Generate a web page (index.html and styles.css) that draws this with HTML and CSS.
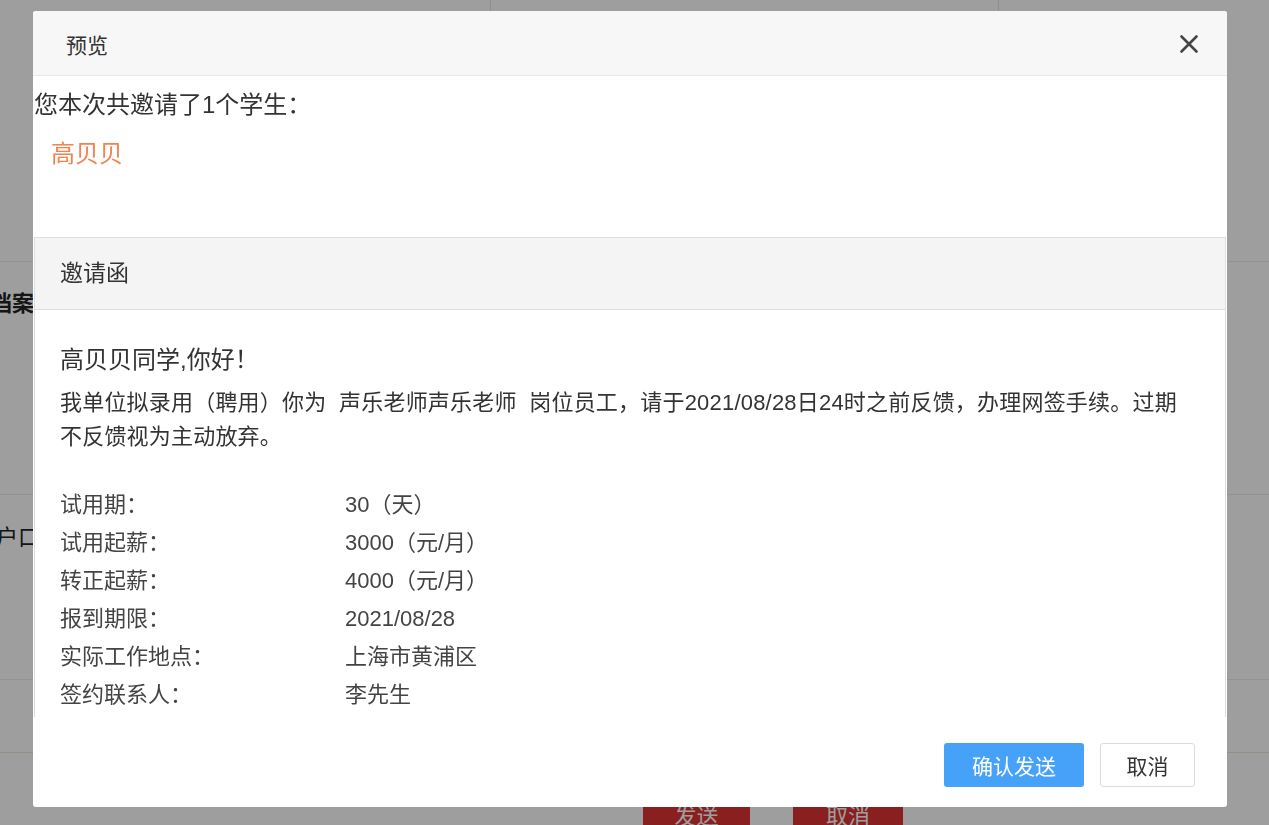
FILE: index.html
```html
<!DOCTYPE html>
<html lang="zh-CN">
<head>
  <meta charset="UTF-8">
  <title>预览</title>
  <link rel="stylesheet" href="styles.css">
</head>
<body>

<div class="page">
  <div class="page-top">
    <div class="top-cell"></div>
    <div class="top-cell"></div>
    <div class="top-cell last"></div>
  </div>
  <div class="section sec-archive">
    <div class="section-label bold">档案信息</div>
  </div>
  <div class="section sec-hukou">
    <div class="section-label hukou">户口所在地</div>
  </div>
  <div class="section sec-green"></div>
  <div class="page-actions">
    <button class="red-btn">发送</button>
    <button class="red-btn wide">取消</button>
  </div>
</div>

<div class="mask">
  <div class="modal">
    <div class="modal-header">
      <span class="modal-title">预览</span>
      <span class="modal-close">
        <svg width="20" height="20" viewBox="0 0 20 20">
          <path d="M2.5 2.5 L17.5 17.5 M17.5 2.5 L2.5 17.5" stroke="#444" stroke-width="2.6" stroke-linecap="round" fill="none"/>
        </svg>
      </span>
    </div>

    <div class="modal-body">
      <div class="invite-count">您本次共邀请了1个学生：</div>
      <div class="invite-names">高贝贝</div>

      <div class="letter">
        <div class="letter-head">邀请函</div>
        <div class="letter-body">
          <div class="greet">高贝贝同学,你好！</div>
          <p class="letter-text">我单位拟录用（聘用）你为&nbsp; 声乐老师声乐老师&nbsp; 岗位员工，请于2021/08/28日24时之前反馈，办理网签手续。过期不反馈视为主动放弃。</p>

          <div class="info">
            <div class="info-row"><span class="info-key">试用期：</span><span class="info-val">30（天）</span></div>
            <div class="info-row"><span class="info-key">试用起薪：</span><span class="info-val">3000（元/月）</span></div>
            <div class="info-row"><span class="info-key">转正起薪：</span><span class="info-val">4000（元/月）</span></div>
            <div class="info-row"><span class="info-key">报到期限：</span><span class="info-val">2021/08/28</span></div>
            <div class="info-row"><span class="info-key">实际工作地点：</span><span class="info-val">上海市黄浦区</span></div>
            <div class="info-row"><span class="info-key">签约联系人：</span><span class="info-val">李先生</span></div>
            <div class="info-row"><span class="info-key">联系电话：</span><span class="info-val">021-12345678</span></div>
          </div>
        </div>
      </div>
    </div>

    <div class="modal-footer">
      <button class="btn btn-primary">确认发送</button>
      <button class="btn btn-default">取消</button>
    </div>
  </div>
</div>

</body>
</html>
```

FILE: styles.css
```css
html, body {
  margin: 0;
  padding: 0;
  height: 100%;
  overflow: hidden;
}
body {
  font-family: "Liberation Sans", "Noto Sans CJK SC", sans-serif;
  color: #333;
  background-color: #fff;
}

/* pagina de fondo */
.page {
  width: 1269px;
}
.page-top {
  display: grid;
  grid-template-columns: 491px 508px 1fr;
  height: 261px;
  border-bottom: 1px solid #ececec;
}
.top-cell {
  border-right: 1px solid #e6e6e6;
}
.top-cell.last {
  border-right: none;
}
.section {
  border-bottom: 1px solid #ececec;
  box-sizing: border-box;
}
.sec-archive {
  height: 233px;
  padding: 27px 0 0 0;
}
.sec-hukou {
  height: 185px;
  padding: 28px 0 0 0;
}
.sec-green {
  height: 73px;
  border-bottom: 1px solid #e6edd8;
}
.section-label {
  font-size: 22px;
  line-height: 30px;
  color: #222;
  white-space: nowrap;
}
.sec-archive .section-label {
  margin-left: -10px;
  font-weight: bold;
}
.sec-hukou .section-label {
  margin-left: -4px;
}
.page-actions {
  display: flex;
  gap: 43px;
  padding: 40px 0 0 643px;
}
.red-btn {
  width: 107px;
  height: 42px;
  border: none;
  background-color: #de3232;
  color: #fff;
  font-family: inherit;
  font-size: 22px;
}
.red-btn.wide {
  width: 110px;
}

/* ventana modal */
.mask {
  position: fixed;
  top: 0;
  left: 0;
  right: 0;
  bottom: 0;
  background-color: rgba(0, 0, 0, 0.38);
  padding: 11px 0 0 33px;
}
.modal {
  width: 1194px;
  height: 796px;
  background-color: #fff;
  border-radius: 3px;
  display: flex;
  flex-direction: column;
  overflow: hidden;
}
.modal-header {
  height: 65px;
  flex: none;
  display: flex;
  align-items: center;
  justify-content: space-between;
  padding: 2px 28px 0 33px;
  box-sizing: border-box;
  background-color: #f7f7f7;
  border-bottom: 1px solid #e8e8e8;
}
.modal-title {
  font-size: 21px;
  color: #333;
}
.modal-close {
  display: flex;
  width: 20px;
  height: 20px;
}
.modal-body {
  height: 641px;
  flex: none;
  overflow: hidden;
  padding-top: 11px;
  box-sizing: border-box;
}
.invite-count {
  font-size: 24px;
  line-height: 36px;
  padding-left: 1px;
}
.invite-names {
  font-size: 24px;
  line-height: 36px;
  color: #f4834f;
  margin-top: 13px;
  padding-left: 18px;
}
.letter {
  margin: 65px 1px 0 1px;
  border: 1px solid #dedede;
}
.letter-head {
  height: 71px;
  line-height: 71px;
  padding-left: 25px;
  font-size: 23px;
  background-color: #f4f4f4;
  border-bottom: 1px solid #dedede;
}
.letter-body {
  padding: 32px 26px 60px 25px;
}
.greet {
  font-size: 24px;
  line-height: 36px;
}
.letter-text {
  margin: 8px 0 0 0;
  font-size: 22px;
  line-height: 34px;
  letter-spacing: 0.2px;
}
.info {
  margin-top: 32px;
}
.info-row {
  display: flex;
  font-size: 22px;
  line-height: 38px;
  color: #444;
}
.info-key {
  width: 285px;
  flex: none;
}

.modal-footer {
  flex: 1;
  display: flex;
  justify-content: flex-end;
  align-items: flex-start;
  gap: 16px;
  padding: 26px 32px 0 0;
}
.btn {
  height: 44px;
  border-radius: 3px;
  font-family: inherit;
  font-size: 21px;
  cursor: pointer;
}
.btn-primary {
  width: 140px;
  border: none;
  background-color: #46a2f9;
  color: #fff;
}
.btn-default {
  width: 95px;
  border: 1px solid #dcdcdc;
  background-color: #fff;
  color: #333;
}
```
